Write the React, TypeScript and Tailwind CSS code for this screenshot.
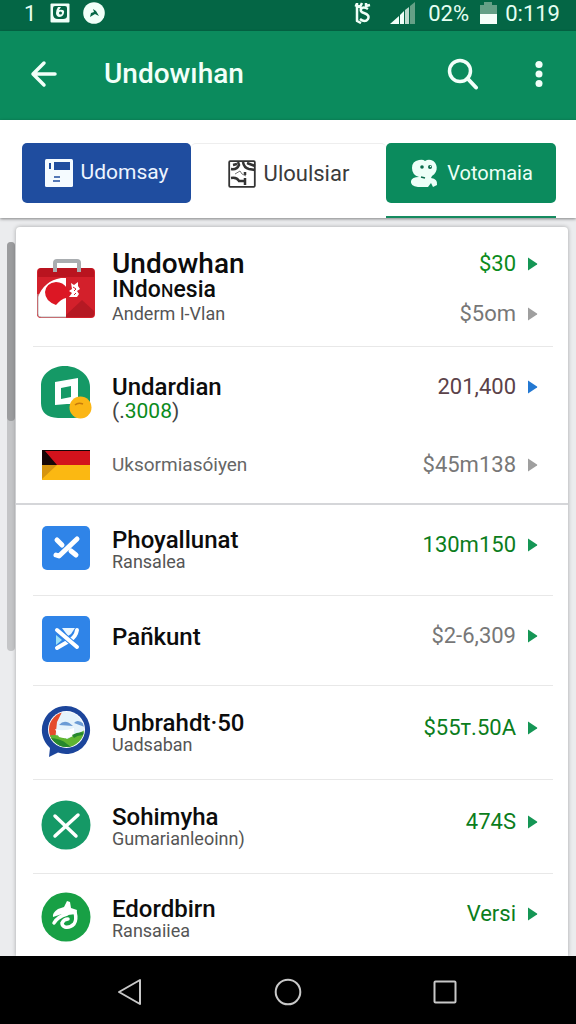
import React from "react";

const FONT = "font-['Roboto','Liberation_Sans',sans-serif]";

function Caret({ color }: { color: string }) {
  return (
    <svg viewBox="0 0 12 14" className={`h-[14px] w-3 shrink-0 ${color}`} aria-hidden="true">
      <path d="M1 .5 10 6.5Q10.600 7 10 7.500L1 13.500Z" fill="currentColor" />
    </svg>
  );
}

function BriefcaseIcon() {
  return (
    <svg viewBox="0 0 58 60" className="h-[60px] w-[58px]" aria-hidden="true">
      <rect x="0" y="9" width="58" height="50" rx="4" fill="#d3202b" />
      <path d="M1 13q0-4 4-4h48q4 0 4 4v5H1Z" fill="#b9141f" />
      <path d="M18 13V4q0-2 2-2h20q2 0 2 2v9" fill="none" stroke="#a9adb0" strokeWidth="4" />
      <path d="M1 19h28v39H4q-3 0-3-3Z" fill="#fff" />
      <path d="M1 19h23Q7 22 1 38Z" fill="#d3202b" />
      <path d="M29 58V56L45 41 57 52V55q0 3-3 3Z" fill="#b51923" />
      <path d="M1 35v20q0 3 3 3h25" fill="none" stroke="#b9b9b9" />
      <path d="M19 23q7 0 11 6l3 2v6l-4 2q-5 1-10 7-11-4-11-13 1-9 11-10Z" fill="#dc1724" />
      <path d="m34 24 3 2 4-3v4l2 3-3 2 2 3-2 3h-8l3-4-3-2 3-2Z" fill="#fff" />
      <path d="m36 28 3 2-2 2m2 2-2 2" fill="none" stroke="#d3202b" />
    </svg>
  );
}

function CoinIcon() {
  return (
    <svg viewBox="0 0 52 54" className="h-[54px] w-[52px]" aria-hidden="true">
      <path d="M25 1C38 1 50 10 50 22v14c0 11-6 17-17 17H18Q1 52 1 38V20C1 9 12 1 25 1Z" fill="#159966" />
      <path fillRule="evenodd" d="m15 17 23-4v26H27l-12 1Zm6 6v11l10-2V21Z" fill="#fff" />
      <circle cx="40.500" cy="42.500" r="11" fill="#fbb615" />
      <path d="M35 40q3-3 8-1" fill="none" stroke="#c77b0b" strokeWidth="1.500" />
    </svg>
  );
}

function FlagIcon() {
  return (
    <svg viewBox="0 0 48 30" className="h-[30px] w-12" aria-hidden="true">
      <path d="M0 0h48v15H0Z" fill="#d3121c" />
      <path d="M0 0h48v1H3l12 14H0Z" fill="#170607" />
      <path d="M0 15h48v15H0Z" fill="#fbb812" />
      <path d="M0 15h15L0 29Z" fill="#d6940f" />
    </svg>
  );
}

function BlueCheckIcon() {
  return (
    <svg viewBox="0 0 48 44" className="h-11 w-12" aria-hidden="true">
      <rect width="48" height="44" rx="5" fill="#2f84e8" />
      <path d="m15 14 5 5m9 6 5 4" stroke="#fff" strokeWidth="5" strokeLinecap="round" />
      <path d="m14 29 3 1 18-17" fill="none" stroke="#fff" strokeWidth="5" strokeLinecap="round" strokeLinejoin="round" />
    </svg>
  );
}

function BlueCrossIcon() {
  return (
    <svg viewBox="0 0 48 46" className="h-[46px] w-12" aria-hidden="true">
      <rect width="48" height="46" rx="5" fill="#2f84e8" />
      <path d="M20 12h13l-4 6-3 2Z" fill="#e9f6ff" />
      <path d="m14 19 6 5-6 5Z" fill="#9be0f7" />
      <path d="M35 14q-1 7-8 11l-12 7" fill="none" stroke="#fff" strokeWidth="4" strokeLinecap="round" />
      <path d="m15 14 20 17" stroke="#2f84e8" strokeWidth="6" />
      <path d="m15 14 20 17" stroke="#fff" strokeWidth="4" strokeLinecap="round" />
    </svg>
  );
}

function LandscapeIcon() {
  return (
    <svg viewBox="0 0 50 52" className="h-[52px] w-[50px]" aria-hidden="true">
      <defs>
        <clipPath id="scene">
          <circle cx="25.500" cy="24.500" r="17.500" />
        </clipPath>
      </defs>
      <path d="M25 1a24 24 0 1 1-8 46.600L8 52l1-9A24 24 0 0 1 25 1Z" fill="#1c459b" />
      <circle cx="25.500" cy="24.500" r="18.500" fill="#fff" />
      <g clipPath="url(#scene)">
        <path d="M7 6h37v38H7Z" fill="#e5f3fb" />
        <path d="M5 5h17l-6 12-2 19H5Z" fill="#e54b2a" />
        <path d="M18 20q6-7 14 1Zm15-2q4-5 11 2v2Z" fill="#6b9cd5" />
        <path d="M6 31q10-3 20 3l18-9v20H6Z" fill="#5fb531" />
        <path d="M6 33q14 0 20 6t12 0v7H8Z" fill="#26872d" />
        <path d="M14 24q8 3 19-1v7q-7 5-15 2Z" fill="#fff" />
        <path d="M31 30q7-4 14-2v3q-7-2-12 2Z" fill="#26872d" />
      </g>
    </svg>
  );
}

function GreenCrossIcon() {
  return (
    <svg viewBox="0 0 50 50" className="h-[50px] w-[50px]" aria-hidden="true">
      <circle cx="25" cy="25" r="24.500" fill="#159966" />
      <path d="m14 16 21 20M37 15 14 36" stroke="#fff" strokeWidth="3.500" strokeLinecap="round" />
    </svg>
  );
}

function GreenSwirlIcon() {
  return (
    <svg viewBox="0 0 50 50" className="h-[50px] w-[50px]" aria-hidden="true">
      <circle cx="25" cy="25" r="24.500" fill="#18a045" />
      <path d="m26 9 3 1 1 6 6 2-1 4-8 1-6-1-9 3q-1-4 5-8l6-2Z" fill="#fff" />
      <path d="M13 31q3-6 13-9M34 20q2 8-1 12-4 4-9 3-3-1-3-4 2-4 6-4" fill="none" stroke="#fff" strokeWidth="3.500" strokeLinecap="round" />
    </svg>
  );
}

type Item = {
  title: string;
  sub?: string;
  value: string;
  valueColor: string;
  icon: React.ReactNode;
  height: string;
};

const items: Item[] = [
  { title: "Phoyallunat", sub: "Ransalea", value: "130m150", valueColor: "text-[#0b7d1c]", icon: <BlueCheckIcon />, height: "h-[91px]" },
  { title: "Pañkunt", value: "$2-6,309", valueColor: "text-[#777777]", icon: <BlueCrossIcon />, height: "h-[90px]" },
  { title: "Unbrahdt·50", sub: "Uadsaban", value: "$55т.50A", valueColor: "text-[#0b7d1c]", icon: <LandscapeIcon />, height: "h-[94px]" },
  { title: "Sohimyha", sub: "Gumarianleoinn)", value: "474S", valueColor: "text-[#0b7d1c]", icon: <GreenCrossIcon />, height: "h-[94px]" },
  { title: "Edordbirn", sub: "Ransaiiea", value: "Versi", valueColor: "text-[#0b7d1c]", icon: <GreenSwirlIcon />, height: "h-[90px]" },
];

const VALUE = "flex items-center gap-[11px] text-[22px] leading-[26px]";
const TITLE = "text-[24px] font-medium leading-6 text-[#0c0c0c]";
const SUB = "text-[18px] leading-5 text-[#555555]";
const ICON = "flex w-[58px] shrink-0 items-center justify-center";

function StatusBar() {
  return (
    <div className="flex h-[31px] items-center bg-[#046645] pb-[5px] pl-6 pr-4 text-[22px] text-[#e6fff2]">
      <span className="w-[26px]">1</span>
      <svg viewBox="0 0 20 20" className="h-5 w-5" aria-hidden="true">
        <rect x=".5" y=".5" width="19" height="19" rx="1" fill="#f0fff8" />
        <path d="M5 3h10q2 0 2 2v8q0 3-4 3H8q-5 0-5-5V5q0-2 2-2Z" fill="#046645" />
        <path d="M8 4h3L9 7q6-1 5 3-1 4-5 4-3-1-3-4 0-3 2-6Z" fill="#f0fff8" />
        <circle cx="10.500" cy="10" r="1.500" fill="#046645" />
      </svg>
      <svg viewBox="0 0 22 22" className="ml-[13px] h-[22px] w-[22px]" aria-hidden="true">
        <circle cx="11" cy="11" r="10.800" fill="#f0fff8" />
        <path d="m10 7 3 2 3 5-4-2-5 3 1-4 3-1Z" fill="#046645" />
      </svg>
      <div className="ml-auto flex items-center">
        <svg viewBox="0 0 18 22" className="h-[22px] w-[18px]" aria-hidden="true">
          <path d="M3 1v18l4 2M1 3l5 2 2-4M12 1v3l4-1M14 7q-5-3-7 0-1 3 3 4 6 2 4 6-3 4-8 0" fill="none" stroke="#effff7" strokeWidth="2.500" strokeLinejoin="round" />
        </svg>
        <svg viewBox="0 0 26 22" className="ml-[18px] h-[22px] w-[26px]" aria-hidden="true">
          <path d="M0 22 9 14v8Zm10-9 4-4v13h-4Z" fill="#f0fff8" />
          <path d="m15 8 4-3v17h-4Z" fill="#bedacd" />
          <path d="m20 4 5-4v22h-5Z" fill="#65a086" />
        </svg>
        <span className="ml-3 w-[48px]">02%</span>
        <svg viewBox="0 0 17 22" className="ml-1 h-[22px] w-[17px]" aria-hidden="true">
          <path d="M0 3h4V0h8v3h5v9H0Z" fill="#65a086" />
          <path d="M0 12h17v10H0Z" fill="#f5fff9" />
        </svg>
        <span className="ml-2">0:119</span>
      </div>
    </div>
  );
}

function AppBar() {
  return (
    <header className="z-10 flex h-[89px] items-center bg-[#0b8b5d] pb-[3px] pl-[30px] pr-[26px] text-[#f2fff9] shadow-[0_1px_3px_rgba(0,0,0,0.3)]">
      <button type="button" aria-label="Back">
        <svg viewBox="0 0 28 28" className="h-7 w-7" aria-hidden="true">
          <path d="M14 3 3 14l11 11M3 14h22" fill="none" stroke="currentColor" strokeWidth="3.500" strokeLinecap="round" strokeLinejoin="round" />
        </svg>
      </button>
      <h1 className="ml-[46px] text-[28px] font-medium leading-9">Undowıhan</h1>
      <button type="button" aria-label="Search" className="ml-auto">
        <svg viewBox="0 0 32 32" className="h-8 w-8" aria-hidden="true">
          <circle cx="13" cy="13" r="10.500" fill="none" stroke="currentColor" strokeWidth="3.500" />
          <path d="m20.500 20.500 8.500 9" stroke="currentColor" strokeWidth="4" strokeLinecap="round" />
        </svg>
      </button>
      <button type="button" aria-label="More options" className="ml-[49px]">
        <svg viewBox="0 0 22 28" className="h-7 w-[22px]" aria-hidden="true">
          <circle cx="11" cy="4.500" r="3.600" fill="currentColor" />
          <circle cx="11" cy="14" r="3.500" fill="currentColor" />
          <circle cx="11" cy="23.500" r="3.500" fill="currentColor" />
        </svg>
      </button>
    </header>
  );
}

function Tabs() {
  const tab = "flex h-[60px] items-center justify-center gap-2 rounded-[5px]";
  return (
    <nav className="z-10 grid h-[98px] grid-cols-[169fr_195fr_170fr] bg-white pl-[22px] pr-5 pt-[23px] shadow-[0_1px_3px_rgba(0,0,0,0.45)]">
      <button type="button" className={`${tab} bg-[#1f4d9f] text-[21px] text-[#edf5ff]`}>
        <svg viewBox="0 0 28 28" className="h-7 w-7" aria-hidden="true">
          <rect width="28" height="28" rx="1.500" fill="#f5fbff" />
          <path d="M9 3h16v8H9ZM4 4h2v6H4Z" fill="#1f4d9f" />
          <path d="M9 18h6m-7 4h7" stroke="#1f4d9f" strokeWidth="1.500" />
        </svg>
        Udomsay
      </button>
      <button type="button" className={`${tab} border-t border-[#eeeeee] text-[22px] text-[#3b3b3b]`}>
        <svg viewBox="0 0 28 28" className="h-7 w-7" aria-hidden="true">
          <rect x="1.200" y="1.200" width="25.600" height="25.600" rx="1" fill="none" stroke="#333" strokeWidth="1.800" />
          <path d="M3 9q6 1 8-4l-1-3M15 2q1 6 6 7l6 1M5 5l4-1M19 3l8 3M3 18q6-1 8 3h5M17 12v3m0 3v7" fill="none" stroke="#333" strokeWidth="2.500" />
          <path d="m7 14 5-3 2 3 4 2" fill="none" stroke="#777" />
        </svg>
        Uloulsiar
      </button>
      <div className="flex flex-col justify-between">
        <button type="button" className={`${tab} w-full bg-[#0b8b5d] text-[20px] text-[#edfff6]`}>
          <svg viewBox="0 0 30 30" className="h-[30px] w-[30px]" aria-hidden="true">
            <path d="M10 2q4-1 6 1 3-2 6-1c7 2 8 12 1 16l-1 2q7 1 6 7l-4 2-2-4-3 4H9q-8-1-7-6 1-4 8-4-7-2-7-9 0-7 7-8Z" fill="#edfff8" />
            <circle cx="13" cy="9" r="1.800" fill="#0b6b4c" />
            <circle cx="21" cy="9" r="2" fill="#0b6b4c" />
            <circle cx="21.500" cy="8.500" r=".7" fill="#edfff8" />
            <path d="m12 19 4 1" fill="none" stroke="#0b6b4c" strokeWidth="1.500" />
          </svg>
          Votomaia
        </button>
        <div className="h-[2px] bg-[#168b60]" />
      </div>
    </nav>
  );
}

export default function App() {
  return (
    <div className={`flex min-h-screen flex-col bg-[#ebecee] ${FONT}`}>
      <StatusBar />
      <AppBar />
      <Tabs />
      <main className="flex min-h-0 flex-1 pr-2">
        <div className="w-4 shrink-0 pl-[7px] pt-6" aria-hidden="true">
          <div className="h-[409px] w-2 rounded-full bg-[#c4c5c7]">
            <div className="h-[179px] rounded-full bg-[#9b9c9e]" />
          </div>
        </div>
        <div className="mt-[9px] h-[729px] flex-1 overflow-hidden rounded-t-[4px] bg-white shadow-[0_0_4px_rgba(0,0,0,0.3)]">
          <ul>
            <li className="ml-[17px] mr-[15px] flex h-[120px] border-b border-[#e8e8e8] pl-1 pr-[14px] pt-6">
              <div className={`${ICON} h-[75px]`}>
                <BriefcaseIcon />
              </div>
              <div className="ml-[17px] flex-1">
                <h2 className="text-[28px] font-medium leading-[26px] text-[#0c0c0c]">Undowhan</h2>
                <p className="text-[23px] font-medium leading-[25px] text-[#0c0c0c]">INdoɴesia</p>
                <p className="text-[18px] leading-6 text-[#555555]">Anderm I-Vlan</p>
              </div>
              <div className="flex h-[76px] flex-col items-end justify-between">
                <div className={`${VALUE} text-[#0b8b1c]`}>
                  $30
                  <Caret color="text-[#159655]" />
                </div>
                <div className={`${VALUE} text-[#777777]`}>
                  $5om
                  <Caret color="text-[#9f9f9f]" />
                </div>
              </div>
            </li>
            <li className="border-b-2 border-[#d5d6d9] pl-[21px] pr-[29px] pt-[18px]">
              <div className="flex h-[70px]">
                <div className={`${ICON} h-[54px]`}>
                  <CoinIcon />
                </div>
                <div className="ml-[17px] flex-1 pt-[10px]">
                  <h2 className={TITLE}>Undardian</h2>
                  <p className="text-[21px] leading-6 text-[#444444]">
                    (.<span className="text-[#0b8b1c]">3008</span>)
                  </p>
                </div>
                <div className={`${VALUE} mt-[9px] h-[26px] text-[#5b4249]`}>
                  201,400
                  <Caret color="text-[#2378d2]" />
                </div>
              </div>
              <div className="flex h-[68px] items-center pb-2">
                <div className={ICON}>
                  <FlagIcon />
                </div>
                <p className="ml-[17px] flex-1 text-[19px] text-[#666666]">Uksormiasóiyen</p>
                <div className={`${VALUE} text-[#777777]`}>
                  $45m138
                  <Caret color="text-[#9f9f9f]" />
                </div>
              </div>
            </li>
            {items.map((item) => (
              <li
                key={item.title}
                className={`ml-[17px] mr-[15px] flex items-center border-b border-[#e8e8e8] pb-1 pl-1 pr-[14px] last:border-0 ${item.height}`}
              >
                <div className={ICON}>{item.icon}</div>
                <div className={`ml-[17px] flex-1 ${item.sub ? "pt-1" : "pb-1"}`}>
                  <h2 className={TITLE}>{item.title}</h2>
                  {item.sub && <p className={SUB}>{item.sub}</p>}
                </div>
                <div className={`${VALUE} pb-[6px] ${item.valueColor}`}>
                  {item.value}
                  <Caret color="text-[#159655]" />
                </div>
              </li>
            ))}
          </ul>
        </div>
      </main>
      <footer className="z-10 flex h-[68px] items-center justify-between bg-black pl-[117px] pr-[118px] pt-[3px] text-[#c8c8c8]">
        <button type="button" aria-label="Navigate back">
          <svg viewBox="0 0 26 28" className="h-7 w-[26px]" aria-hidden="true">
            <path d="M23 2v24L2 14Z" fill="none" stroke="currentColor" strokeWidth="2" strokeLinejoin="round" />
          </svg>
        </button>
        <button type="button" aria-label="Home">
          <svg viewBox="0 0 28 28" className="h-7 w-7" aria-hidden="true">
            <circle cx="14" cy="14" r="12.300" fill="none" stroke="currentColor" strokeWidth="2" />
          </svg>
        </button>
        <button type="button" aria-label="Recent apps">
          <svg viewBox="0 0 26 26" className="h-[26px] w-[26px]" aria-hidden="true">
            <rect x="2.500" y="2.500" width="21" height="21" rx="1" fill="none" stroke="currentColor" strokeWidth="2" />
          </svg>
        </button>
      </footer>
    </div>
  );
}
